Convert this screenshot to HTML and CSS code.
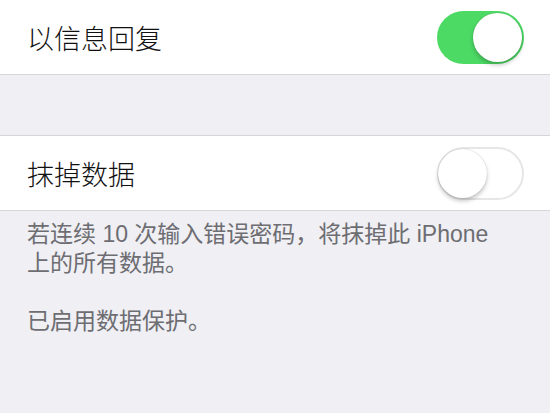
FILE: index.html
```html
<!DOCTYPE html>
<html lang="zh-CN">
<head>
<meta charset="utf-8">
<link rel="stylesheet" href="styles.css">
</head>
<body>
  <div class="group">
    <div class="row">
      <span class="label">以信息回复</span>
      <span class="switch on"><span class="knob"></span></span>
    </div>
  </div>
  <div class="spacer"></div>
  <div class="group">
    <div class="row">
      <span class="label">抹掉数据</span>
      <span class="switch off"><span class="knob"></span></span>
    </div>
  </div>
  <div class="footer">
    <p>若连续 10 次输入错误密码，将抹掉此 iPhone 上的所有数据。</p>
    <p>已启用数据保护。</p>
  </div>
</body>
</html>
```
FILE: styles.css
```css
html, body {
  margin: 0;
  padding: 0;
  background: #efeff4;
  font-family: "Noto Sans CJK SC", "Noto Sans", sans-serif;
}
body {
  width: 550px;
  height: 413px;
  overflow: hidden;
}
.group {
  background: #ffffff;
  border-bottom: 1px solid #d6d6da;
}
.spacer + .group {
  border-top: 1px solid #d6d6da;
}
.row {
  height: 74px;
  display: flex;
  align-items: center;
  justify-content: space-between;
  padding: 0 26px 0 27px;
}
.label {
  font-size: 27px;
  color: #111111;
  font-weight: 300;
}
.spacer {
  height: 60px;
}
.switch {
  width: 87px;
  height: 53px;
  border-radius: 27px;
  box-sizing: border-box;
  display: flex;
  align-items: center;
}
.switch.on {
  background: #4cd964;
  justify-content: flex-end;
  padding: 0 2px;
}
.switch.off {
  background: #ffffff;
  border: 2px solid #e6e6e8;
  justify-content: flex-start;
}
.knob {
  width: 49px;
  height: 49px;
  border-radius: 50%;
  background: #ffffff;
  box-shadow: 0 3px 4px rgba(0,0,0,0.22), 0 0 1px rgba(0,0,0,0.25);
}
.switch.off .knob {
  margin-left: -1px;
}
.footer {
  padding: 9px 40px 0 27px;
  color: #6d6d72;
  font-family: "Liberation Sans", "Noto Sans CJK SC", sans-serif;
  font-size: 23px;
  line-height: 29px;
}
.footer p {
  margin: 0 0 29px 0;
}
```
